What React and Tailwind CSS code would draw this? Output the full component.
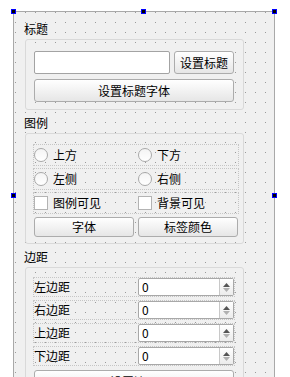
const FONT = "font-['Noto_Sans_CJK_SC','Noto_Sans',sans-serif]";
const DOTS =
  "bg-[#f0f0f0] bg-fixed bg-[radial-gradient(circle_at_5.5px_2.5px,#9a9a9a_0.7px,transparent_0.7px)] bg-[length:10px_10px]";

const Handle = ({ className }) => (
  <div
    className={`absolute w-[5px] h-[5px] bg-black border border-[#0000ff] ${className}`}
  />
);

const PushButton = ({ children, className = "" }) => (
  <button
    className={`flex items-center justify-center rounded-[3px] border border-[#acacac] bg-gradient-to-b from-white to-[#e6e6e6] text-[12px] leading-[14px] text-black ${className}`}
  >
    {children}
  </button>
);

const GroupBox = ({ children, className = "" }) => (
  <div
    className={`ml-px w-[219px] rounded-[3px] border border-[#d9d9d9] ${DOTS} ${className}`}
  >
    {children}
  </div>
);

const SectionLabel = ({ children, className = "" }) => (
  <div className={`h-[14px] text-[12px] leading-[14px] text-black ${className}`}>
    {children}
  </div>
);

const Radio = ({ label }) => (
  <div className="flex items-center gap-[5px] h-[20px]">
    <span className="w-[14px] h-[14px] rounded-full border border-[#a9a9a9] bg-gradient-to-b from-[#f4f4f4] to-white" />
    <span className="text-[12px] leading-[14px]">{label}</span>
  </div>
);

const Check = ({ label }) => (
  <div className="flex items-center gap-[5px] h-[20px]">
    <span className="w-[14px] h-[14px] border border-[#b3b3b3] bg-white" />
    <span className="text-[12px] leading-[14px]">{label}</span>
  </div>
);

const SpinBox = ({ value }) => (
  <div className="flex w-[96px] h-[18px] rounded-[2px] border border-[#a8a8a8] bg-white">
    <div className="flex-1 pl-[3px] text-[12px] leading-[16px]">{value}</div>
    <div className="w-[14px] flex flex-col items-center justify-center gap-[1px] border-l border-[#c8c8c8] bg-gradient-to-b from-white to-[#ececec]">
      {/* up / down arrows */}
      <svg width="7" height="4" viewBox="0 0 7 4">
        <path d="M3.5 0L7 4H0z" fill="#555" />
      </svg>
      <svg width="7" height="4" viewBox="0 0 7 4">
        <path d="M0 0H7L3.5 4z" fill="#b0b0b0" />
      </svg>
    </div>
  </div>
);

const MARGINS = ["左边距", "右边距", "上边距", "下边距"];

const App = () => {
  return (
    <div className={`relative w-[290px] h-[377px] overflow-hidden bg-white ${FONT}`}>
      {/* Form */}
      <div
        className={`ml-[13px] mt-[11px] w-[262px] h-[369px] border border-[#a9a9a9] ${DOTS} pl-[10px] pt-[10px]`}
      >
        {/* 标题 */}
        <SectionLabel>标题</SectionLabel>
        <GroupBox className="mt-[3px] h-[71px] pl-[8px] pt-[11px]">
          <div className="flex gap-[4px]">
            <div className="w-[136px] h-[23px] rounded-[2px] border border-[#a3a3a3] bg-white" />
            <PushButton className="w-[60px] h-[23px]">设置标题</PushButton>
          </div>
          <PushButton className="mt-[5px] w-[200px] h-[23px]">设置标题字体</PushButton>
        </GroupBox>

        {/* 图例 */}
        <SectionLabel className="mt-[6px]">图例</SectionLabel>
        <GroupBox className="mt-[3px] h-[111px] pl-[8px] pt-[11px]">
          <div className="flex flex-col gap-[4px] w-[204px]">
            <div className="grid grid-cols-2 gap-x-[4px] outline-1 outline-dotted outline-[#c6c6c6]">
              <Radio label="上方" />
              <Radio label="下方" />
            </div>
            <div className="grid grid-cols-2 gap-x-[4px] outline-1 outline-dotted outline-[#c6c6c6]">
              <Radio label="左侧" />
              <Radio label="右侧" />
            </div>
            <div className="grid grid-cols-2 gap-x-[4px] outline-1 outline-dotted outline-[#c6c6c6]">
              <Check label="图例可见" />
              <Check label="背景可见" />
            </div>
            <div className="grid grid-cols-2 gap-x-[4px]">
              <PushButton className="h-[20px]">字体</PushButton>
              <PushButton className="h-[20px]">标签颜色</PushButton>
            </div>
          </div>
        </GroupBox>

        {/* 边距 */}
        <SectionLabel className="mt-[6px]">边距</SectionLabel>
        <GroupBox className="mt-[3px] h-[130px] pl-[8px] pt-[10px]">
          <div className="flex flex-col gap-[5px] w-[200px]">
            {MARGINS.map((m) => (
              <div
                key={m}
                className="flex items-center justify-between outline-1 outline-dotted outline-[#c6c6c6]"
              >
                <span className="text-[12px] leading-[14px]">{m}</span>
                <SpinBox value="0" />
              </div>
            ))}
            <PushButton className="h-[23px]">设置边距</PushButton>
          </div>
        </GroupBox>
      </div>

      {/* selection handles */}
      <Handle className="left-[11px] top-[9px]" />
      <Handle className="left-[141px] top-[9px]" />
      <Handle className="left-[272px] top-[9px]" />
      <Handle className="left-[11px] top-[193px]" />
      <Handle className="left-[272px] top-[193px]" />
    </div>
  );
};

export default App;
